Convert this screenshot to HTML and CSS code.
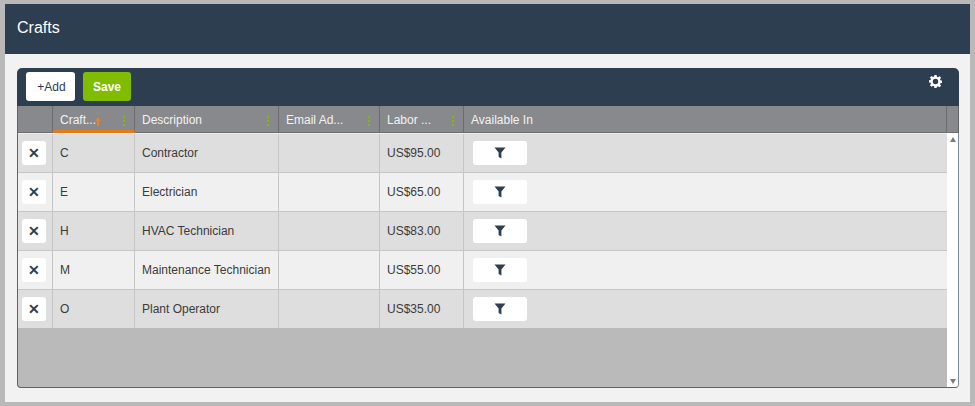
FILE: index.html
```html
<!DOCTYPE html>
<html lang="en">
<head>
    <meta charset="UTF-8">
    <meta name="viewport" content="width=device-width, initial-scale=1.0">
    <title>Crafts</title>
    <link rel="stylesheet" href="styles.css">
</head>
<body>
    <div class="window">
        <div class="header">Crafts</div>
        <div class="content">
            <div class="grid">
                <div class="toolbar">
                    <button class="add-btn">+Add</button>
                    <button class="save-btn">Save</button>
                    <svg class="gear" viewBox="0 0 24 24" width="13" height="13">
                        <path fill="#fff" fill-rule="evenodd" d="M10 0h4l.6 3.4 2 .8 2.8-2 2.9 2.9-2 2.8.8 2 3.4.6v4l-3.4.6-.8 2 2 2.8-2.9 2.9-2.8-2-2 .8L14 24h-4l-.6-3.4-2-.8-2.8 2-2.9-2.9 2-2.8-.8-2L-.5 14v-4l3.4-.6.8-2-2-2.8 2.9-2.9 2.8 2 2-.8zM12 7a5 5 0 1 0 0 10 5 5 0 0 0 0-10z"/>
                    </svg>
                </div>
                <div class="head-row">
                    <div class="col-del th"></div>
                    <div class="col-code th sorted"><span>Craft...</span><span class="sort-arrow"></span><span class="dots"></span></div>
                    <div class="col-desc th"><span>Description</span><span class="dots"></span></div>
                    <div class="col-email th"><span>Email Ad...</span><span class="dots"></span></div>
                    <div class="col-rate th"><span>Labor ...</span><span class="dots"></span></div>
                    <div class="col-avail th"><span>Available In</span></div>
                    <div class="col-scroll th"></div>
                </div>
                <div class="grid-body">
                    <div class="rows">
                        <div class="row">
                            <div class="col-del td"><button class="del-btn">&#10005;</button></div>
                            <div class="col-code td">C</div>
                            <div class="col-desc td">Contractor</div>
                            <div class="col-email td"></div>
                            <div class="col-rate td">US$95.00</div>
                            <div class="col-avail td"><button class="filter-btn"><svg viewBox="0 0 12 12" width="12" height="12"><path fill="#2c3e50" d="M.5 .5h11L7.4 5.6V11.5L4.6 10V5.6z"/></svg></button></div>
                        </div>
                        <div class="row">
                            <div class="col-del td"><button class="del-btn">&#10005;</button></div>
                            <div class="col-code td">E</div>
                            <div class="col-desc td">Electrician</div>
                            <div class="col-email td"></div>
                            <div class="col-rate td">US$65.00</div>
                            <div class="col-avail td"><button class="filter-btn"><svg viewBox="0 0 12 12" width="12" height="12"><path fill="#2c3e50" d="M.5 .5h11L7.4 5.6V11.5L4.6 10V5.6z"/></svg></button></div>
                        </div>
                        <div class="row">
                            <div class="col-del td"><button class="del-btn">&#10005;</button></div>
                            <div class="col-code td">H</div>
                            <div class="col-desc td">HVAC Technician</div>
                            <div class="col-email td"></div>
                            <div class="col-rate td">US$83.00</div>
                            <div class="col-avail td"><button class="filter-btn"><svg viewBox="0 0 12 12" width="12" height="12"><path fill="#2c3e50" d="M.5 .5h11L7.4 5.6V11.5L4.6 10V5.6z"/></svg></button></div>
                        </div>
                        <div class="row">
                            <div class="col-del td"><button class="del-btn">&#10005;</button></div>
                            <div class="col-code td">M</div>
                            <div class="col-desc td">Maintenance Technician</div>
                            <div class="col-email td"></div>
                            <div class="col-rate td">US$55.00</div>
                            <div class="col-avail td"><button class="filter-btn"><svg viewBox="0 0 12 12" width="12" height="12"><path fill="#2c3e50" d="M.5 .5h11L7.4 5.6V11.5L4.6 10V5.6z"/></svg></button></div>
                        </div>
                        <div class="row">
                            <div class="col-del td"><button class="del-btn">&#10005;</button></div>
                            <div class="col-code td">O</div>
                            <div class="col-desc td">Plant Operator</div>
                            <div class="col-email td"></div>
                            <div class="col-rate td">US$35.00</div>
                            <div class="col-avail td"><button class="filter-btn"><svg viewBox="0 0 12 12" width="12" height="12"><path fill="#2c3e50" d="M.5 .5h11L7.4 5.6V11.5L4.6 10V5.6z"/></svg></button></div>
                        </div>
                    </div>
                    <div class="scrollbar">
                        <span class="arrow-up"></span>
                        <span class="arrow-down"></span>
                    </div>
                </div>
            </div>
        </div>
    </div>
</body>
</html>
```

FILE: styles.css
```css
html, body {
    height: 100%;
}
body {
    font-family: "Liberation Sans", Arial, sans-serif;
    margin: 0;
    padding: 4px 5px;
    box-sizing: border-box;
    background-color: #b9b9b9;
    overflow: hidden;
}
button {
    font-family: inherit;
    border: none;
    padding: 0;
    cursor: pointer;
}
.window {
    height: 100%;
    display: flex;
    flex-direction: column;
    background-color: #f2f2f2;
}
.header {
    height: 50px;
    flex: none;
    box-sizing: border-box;
    padding: 15px 12px 0;
    background-color: #2c3e50;
    color: white;
    font-size: 16px;
    line-height: 18px;
}
.content {
    flex: 1;
    display: flex;
    padding: 14px 11px 14px 12px;
}
.grid {
    flex: 1;
    display: flex;
    flex-direction: column;
    border-radius: 4px;
}
.toolbar {
    height: 38px;
    flex: none;
    box-sizing: border-box;
    display: flex;
    gap: 8px;
    align-items: flex-start;
    padding: 4px 9px;
    background-color: #2c3e50;
    border-radius: 5px 5px 0 0;
}
.add-btn {
    width: 49px;
    height: 29px;
    padding-left: 2px;
    background-color: white;
    color: #2c3e50;
    font-size: 12px;
    border-radius: 3px;
}
.save-btn {
    width: 48px;
    height: 29px;
    background-color: #80bc00;
    color: white;
    font-size: 12px;
    font-weight: bold;
    border-radius: 3px;
}
.gear {
    margin-left: auto;
    margin-top: 3px;
    margin-right: 8px;
}
.head-row {
    height: 27px;
    flex: none;
    display: flex;
    background-color: #88898c;
    border-left: 1px solid #5f6368;
    border-right: 1px solid #5f6368;
    box-sizing: border-box;
}
.th {
    box-sizing: border-box;
    display: flex;
    align-items: center;
    padding: 2px 7px 0;
    color: #f2f2f2;
    font-size: 12px;
    border-right: 1px solid #6b6c70;
    border-bottom: 1px solid #6d6e71;
    position: relative;
}
.sorted {
    padding-top: 4px;
    border-bottom: 3px solid #e07b1a;
}
.sort-arrow {
    position: absolute;
    left: 44px;
    top: 13px;
    width: 2px;
    height: 7px;
    background-color: #e8832a;
}
.sort-arrow::before {
    content: "";
    position: absolute;
    left: -2px;
    top: -2px;
    border-left: 3px solid transparent;
    border-right: 3px solid transparent;
    border-bottom: 4px solid #e8832a;
}
.dots {
    position: absolute;
    right: 9px;
    top: 10px;
    width: 2px;
    height: 2px;
    background-color: #80bc00;
    box-shadow: 0 4px 0 #80bc00, 0 8px 0 #80bc00;
}
.col-del {
    width: 35px;
    flex: none;
}
.col-code {
    width: 82px;
    flex: none;
}
.col-desc {
    width: 144px;
    flex: none;
}
.col-email {
    width: 101px;
    flex: none;
}
.col-rate {
    width: 84px;
    flex: none;
}
.col-avail {
    flex: 1;
}
.col-scroll {
    width: 11px;
    flex: none;
    border-right: none;
    padding: 0;
}
.grid-body {
    flex: 1;
    display: flex;
    min-height: 0;
    border-left: 1px solid #5f6368;
    border-right: 1px solid #7c8a99;
    border-bottom: 1px solid #5f6368;
    border-radius: 0 0 4px 4px;
    background-color: #bababa;
    overflow: hidden;
}
.rows {
    flex: 1;
}
.row {
    height: 39px;
    box-sizing: border-box;
    display: flex;
    background-color: #dedede;
    border-top: 1px solid #c6c6c6;
}
.row:nth-child(even) {
    background-color: #f0f0f0;
}
.row:first-child {
    border-top-color: #eeeeee;
}
.td {
    box-sizing: border-box;
    display: flex;
    align-items: center;
    padding: 0 7px;
    color: #3b3b3b;
    font-size: 12px;
    border-right: 1px solid #c6c6c6;
}
.row .col-avail {
    border-right: none;
}
.row .col-del {
    padding: 0 0 0 4px;
}
.del-btn {
    width: 24px;
    height: 24px;
    background-color: white;
    color: #2c3e50;
    font-size: 14px;
    font-weight: bold;
    border-radius: 3px;
}
.filter-btn {
    width: 54px;
    height: 24px;
    margin-left: 2px;
    background-color: white;
    border-radius: 3px;
    display: flex;
    align-items: center;
    justify-content: center;
}
.scrollbar {
    width: 11px;
    flex: none;
    background-color: white;
    display: flex;
    flex-direction: column;
    justify-content: space-between;
    align-items: center;
    padding: 4px 0 3px;
}
.arrow-up {
    border-left: 3px solid transparent;
    border-right: 3px solid transparent;
    border-bottom: 5px solid #7a7a7a;
}
.arrow-down {
    border-left: 3px solid transparent;
    border-right: 3px solid transparent;
    border-top: 5px solid #7a7a7a;
}
```
